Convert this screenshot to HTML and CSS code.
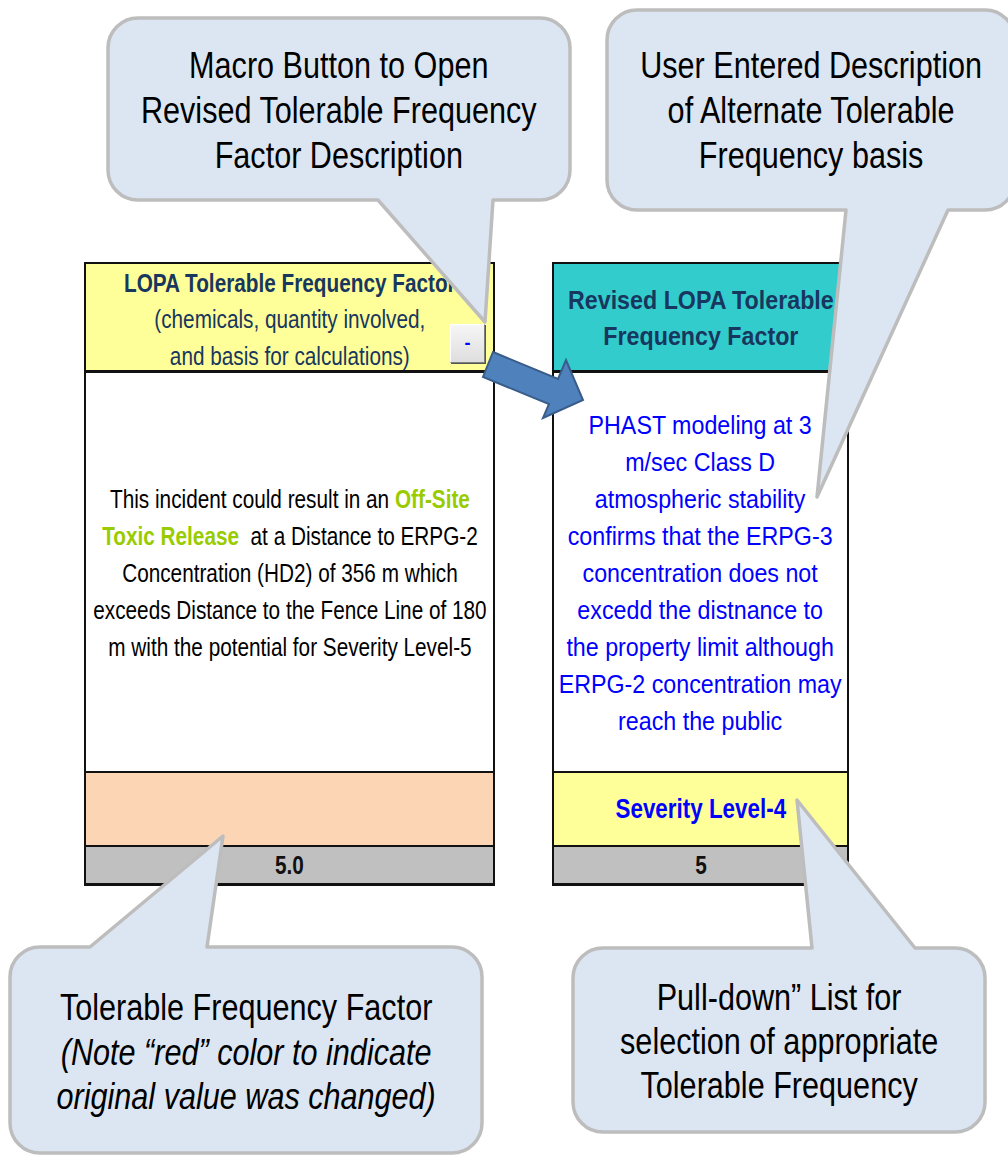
FILE: index.html
```html
<!DOCTYPE html>
<html lang="en">
<head>
  <meta charset="UTF-8">
  <meta name="viewport" content="width=device-width, initial-scale=1.0">
  <title>LOPA Tolerable Frequency Factor</title>
  <link rel="stylesheet" href="styles.css">
</head>
<body>
  <div class="page">
    <div class="sheet">
      <div class="col col-orig">
        <div class="cell head head-orig">
          <span class="squeeze"><b>LOPA Tolerable Frequency Factor</b><br>(chemicals, quantity involved,<br>and basis for calculations)</span>
          <button class="macro-btn">-</button>
        </div>
        <div class="cell desc">
          <span class="squeeze">This incident could result in an <span class="hl">Off-Site</span><br><span class="hl">Toxic Release</span>&nbsp; at a Distance to ERPG-2<br>Concentration (HD2) of 356 m which<br>exceeds Distance to the Fence Line of 180<br>m with the potential for Severity Level-5</span>
        </div>
        <div class="cell pick pick-orig"></div>
        <div class="cell value"><span class="squeeze">5.0</span></div>
      </div>

      <div class="col col-rev">
        <div class="cell head head-rev">
          <span class="squeeze"><b>Revised LOPA Tolerable<br>Frequency Factor</b></span>
        </div>
        <div class="cell desc desc-rev">
          <span class="squeeze">PHAST modeling at 3<br>m/sec Class D<br>atmospheric stability<br>confirms that the ERPG-3<br>concentration does not<br>excedd the distnance to<br>the property limit although<br>ERPG-2 concentration may<br>reach the public</span>
        </div>
        <div class="cell pick pick-rev"><span class="squeeze">Severity Level-4</span></div>
        <div class="cell value"><span class="squeeze">5</span></div>
      </div>
    </div>

    <svg class="overlay" width="1008" height="1155" viewBox="0 0 1008 1155">
      <g class="callout">
        <path d="M138 18 H540 A30 30 0 0 1 570 48 V170 A30 30 0 0 1 540 200 H493 L485 322 L378 200 H138 A30 30 0 0 1 108 170 V48 A30 30 0 0 1 138 18 Z"/>
        <path d="M637 10 H985 A30 30 0 0 1 1015 40 V180 A30 30 0 0 1 985 210 H948 L817 497 L846 210 H637 A30 30 0 0 1 607 180 V40 A30 30 0 0 1 637 10 Z"/>
        <path d="M40 947 H90 L223 836 L207 947 H452 A30 30 0 0 1 482 977 V1123 A30 30 0 0 1 452 1153 H40 A30 30 0 0 1 10 1123 V977 A30 30 0 0 1 40 947 Z"/>
        <path d="M603 948 H812 L797 800 L915 948 H955 A30 30 0 0 1 985 978 V1102 A30 30 0 0 1 955 1132 H603 A30 30 0 0 1 573 1102 V978 A30 30 0 0 1 603 948 Z"/>
      </g>
      <polygon class="arrow" points="493,352 558,379 566,360 583,400 543,418 549,404 483,377"/>
    </svg>

    <div class="note note-macro"><span class="squeeze">Macro Button to Open<br>Revised Tolerable Frequency<br>Factor Description</span></div>
    <div class="note note-entered"><span class="squeeze">User Entered Description<br>of Alternate Tolerable<br>Frequency basis</span></div>
    <div class="note note-factor"><span class="squeeze">Tolerable Frequency Factor<br><i>(Note “red” color to indicate<br>original value was changed)</i></span></div>
    <div class="note note-pull"><span class="squeeze">Pull-down” List for<br>selection of appropriate<br>Tolerable Frequency</span></div>
  </div>
</body>
</html>
```

FILE: styles.css
```css
body {
  margin: 0;
  background: #fff;
  overflow: hidden;
  font-family: "Liberation Sans", Arial, sans-serif;
}

.page {
  position: relative;
  width: 1008px;
  height: 1155px;
  overflow: hidden;
}

/* Arial Narrow look: regular face squeezed horizontally */
.squeeze {
  display: inline-block;
  white-space: nowrap;
  transform: scaleX(0.83);
}

.sheet {
  display: flex;
  align-items: flex-start;
  gap: 57px;
  padding: 262px 0 0 84px;
}

.col {
  display: flex;
  flex-direction: column;
  border: 2px solid #111;
  border-bottom-width: 3px;
  box-sizing: border-box;
}

.col-orig {
  width: 411px;
}

.col-rev {
  width: 297px;
}

.cell {
  box-sizing: border-box;
  display: flex;
  align-items: center;
  justify-content: center;
  text-align: center;
  font-size: 25px;
  line-height: 37px;
}

.head {
  position: relative;
  height: 109px;
  padding-top: 5px;
  border-bottom: 3px solid #111;
  color: #17375e;
  line-height: 36.5px;
}

.head-orig {
  background: #ffff99;
}

.head-rev {
  background: #33cccc;
  padding-top: 2px;
}

.head-rev .squeeze,
.desc-rev .squeeze {
  transform: scaleX(0.93);
}

.macro-btn {
  position: absolute;
  right: 8px;
  bottom: 7px;
  width: 35px;
  height: 39px;
  padding: 0;
  background: linear-gradient(#f6f6f6, #dedede);
  border: 1px solid;
  border-color: #fff #7f7f7f #7f7f7f #fff;
  box-shadow: 1px 1px 0 #555;
  color: #0000ff;
  font: bold 18px "Liberation Sans", Arial, sans-serif;
}

.desc {
  height: 400px;
  padding-top: 2px;
  border-bottom: 2px solid #111;
  background: #fff;
  color: #000;
}

.desc-rev {
  color: #0000ff;
}

.hl {
  color: #99cc00;
  font-weight: bold;
}

.pick {
  height: 74px;
  border-bottom: 2px solid #111;
}

.pick-orig {
  background: #fcd5b4;
}

.pick-rev {
  background: #ffff99;
  color: #0000ff;
  font-weight: bold;
  font-size: 27px;
}

.value {
  height: 36px;
  background: #c0c0c0;
  font-weight: bold;
  color: #111;
}

.overlay {
  position: absolute;
  top: 0;
  left: 0;
  pointer-events: none;
}

.callout path {
  fill: #dce6f2;
  stroke: #bdbdbd;
  stroke-width: 3.5;
  stroke-linejoin: round;
}

.arrow {
  fill: #4f81bd;
  stroke: #385d8a;
  stroke-width: 2;
  stroke-linejoin: miter;
}

.note {
  position: absolute;
  box-sizing: border-box;
  display: flex;
  align-items: center;
  justify-content: center;
  text-align: center;
  color: #000;
  font-size: 36px;
  line-height: 45px;
}

.note .squeeze {
  transform: scaleX(0.85);
}

.note-macro {
  left: 108px;
  top: 18px;
  width: 462px;
  height: 182px;
  padding-top: 3px;
}

.note-entered {
  left: 607px;
  top: 10px;
  width: 408px;
  height: 200px;
}

.note-factor {
  left: 10px;
  top: 947px;
  width: 472px;
  height: 206px;
  padding-top: 6px;
  line-height: 44.5px;
}

.note-pull {
  left: 573px;
  top: 948px;
  width: 412px;
  height: 184px;
  padding-top: 4px;
  line-height: 44px;
}
```
